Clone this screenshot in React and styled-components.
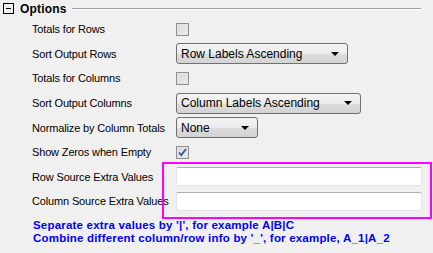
import React from 'react'
import styled, { createGlobalStyle } from 'styled-components'

const GlobalStyle = createGlobalStyle`
  html, body {
    margin: 0;
    padding: 0;
    background: #f0f0f0;
  }
  body {
    font-family: "Liberation Sans", Arial, sans-serif;
    font-size: 11px;
    color: #000;
  }
`

const Panel = styled.div`
  position: relative;
  width: 433px;
  height: 253px;
  background: #f0f0f0;
  overflow: hidden;
`

const Header = styled.div`
  display: flex;
  align-items: center;
  height: 17px;
  padding: 0 12px 0 3px;
`

const Toggle = styled.div`
  width: 9px;
  height: 9px;
  border: 1px solid #000;
  position: relative;
  margin-right: 6px;
  &::after {
    content: '';
    position: absolute;
    left: 2px;
    right: 2px;
    top: 4px;
    height: 1px;
    background: #000;
  }
`

const HeaderTitle = styled.span`
  font-weight: bold;
  font-size: 12px;
  letter-spacing: 0.2px;
`

const HeaderRule = styled.div`
  flex: 1;
  height: 1px;
  margin-left: 5px;
  background: #a0a0a0;
  border-bottom: 1px solid #fff;
`

const Rows = styled.div`
  display: flex;
  flex-direction: column;
`

const Row = styled.div`
  display: flex;
  align-items: center;
  height: 24.6px;
`

const Label = styled.div`
  width: 144px;
  padding-left: 32px;
  white-space: nowrap;
  letter-spacing: -0.15px;
`

const Checkbox = styled.div`
  width: 11px;
  height: 11px;
  border: 1px solid #8f8f8f;
  background: linear-gradient(135deg, #d8d8d8 0%, #eeeeee 100%);
  box-shadow: inset 0 0 0 1px #e4e4e4;
  display: flex;
  align-items: center;
  justify-content: center;
`

const Select = styled.div`
  width: ${p => p.$w}px;
  height: 21px;
  box-sizing: border-box;
  border: 1px solid #707070;
  border-radius: 3px;
  background: linear-gradient(#f4f4f4 0%, #ececec 50%, #dcdcdc 51%, #d4d4d4 100%);
  display: flex;
  align-items: center;
  padding: 0 8px 0 4px;
  font-size: 12px;
`

const SelectText = styled.span`
  flex: 1;
`

const Arrow = styled.span`
  width: 0;
  height: 0;
  border-left: 4px solid transparent;
  border-right: 4px solid transparent;
  border-top: 4px solid #000;
`

const TextInput = styled.div`
  width: 246px;
  height: 19px;
  box-sizing: border-box;
  background: #fff;
  border: 1px solid #e2e3ea;
  border-top-color: #abadb3;
  border-radius: 2px;
`

const Notes = styled.div`
  padding: 5px 0 0 33px;
  color: #0000ff;
  font-weight: bold;
  font-size: 11.5px;
  letter-spacing: 0.2px;
  line-height: 13px;
  white-space: nowrap;
`

const Highlight = styled.div`
  position: absolute;
  left: 162px;
  top: 162px;
  width: 270px;
  height: 57px;
  box-sizing: border-box;
  border: 2px solid #ff00ff;
  pointer-events: none;
`

function Check({ checked }) {
  return (
    <Checkbox>
      {checked && (
        <svg width="9" height="9" viewBox="0 0 9 9">
          <path d="M1 4.5 L3.3 7 L8 1" fill="none" stroke="#3355aa" strokeWidth="1.8" />
        </svg>
      )}
    </Checkbox>
  )
}

function Dropdown({ value, width }) {
  return (
    <Select $w={width}>
      <SelectText>{value}</SelectText>
      <Arrow />
    </Select>
  )
}

export default function App() {
  return (
    <Panel>
      <GlobalStyle />
      <Header>
        <Toggle />
        <HeaderTitle>Options</HeaderTitle>
        <HeaderRule />
      </Header>
      <Rows>
        <Row>
          <Label>Totals for Rows</Label>
          <Check />
        </Row>
        <Row>
          <Label>Sort Output Rows</Label>
          <Dropdown value="Row Labels Ascending" width={172} />
        </Row>
        <Row>
          <Label>Totals for Columns</Label>
          <Check />
        </Row>
        <Row>
          <Label>Sort Output Columns</Label>
          <Dropdown value="Column Labels Ascending" width={185} />
        </Row>
        <Row>
          <Label>Normalize by Column Totals</Label>
          <Dropdown value="None" width={82} />
        </Row>
        <Row>
          <Label>Show Zeros when Empty</Label>
          <Check checked />
        </Row>
        <Row>
          <Label>Row Source Extra Values</Label>
          <TextInput />
        </Row>
        <Row>
          <Label>Column Source Extra Values</Label>
          <TextInput />
        </Row>
      </Rows>
      <Notes>
        <div>Separate extra values by '|', for example A|B|C</div>
        <div>Combine different column/row info by '_', for example, A_1|A_2</div>
      </Notes>
      <Highlight />
    </Panel>
  )
}
